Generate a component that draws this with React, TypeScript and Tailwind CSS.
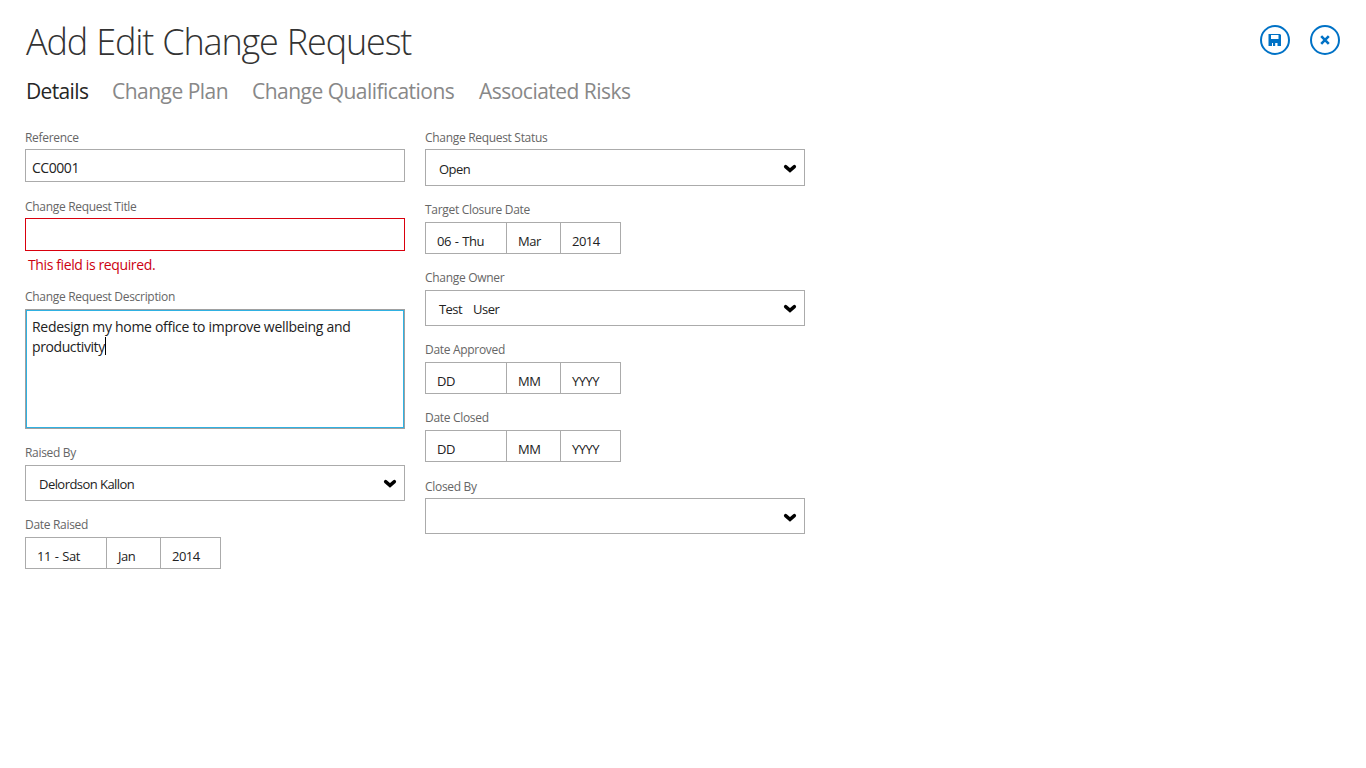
import React from "react";

function Chevron() {
  return (
    <svg width="14" height="10" viewBox="0 0 14 10" className="mt-[2px] mr-[7px] shrink-0">
      <path d="M2.6 2.6 L7 6.4 L11.4 2.6" fill="none" stroke="#000" strokeWidth="3.4" strokeLinecap="round" />
    </svg>
  );
}

function Label({ children }: { children: string }) {
  return <div className="h-[16px] whitespace-pre text-[12px] leading-[16px] tracking-[-0.31px] text-[#666]">{children}</div>;
}

function Select({ label, first, second }: { label: string; first: string; second?: string }) {
  return (
    <div>
      <Label>{label}</Label>
      <div className="mt-[4px] flex h-[36px] items-center justify-between border border-[#ababab] pl-[13px]">
        <div className="flex gap-[11px] pt-[2px] text-[13px] leading-[18px] tracking-[-0.55px] text-[#222]">
          <span>{first}</span>
          {second && <span>{second}</span>}
        </div>
        <Chevron />
      </div>
    </div>
  );
}

function DateField({ label, d, m, y }: { label: string; d: string; m: string; y: string }) {
  return (
    <div>
      <Label>{label}</Label>
      <div className="mt-[4px] flex h-[32px] w-[196px] border border-[#ababab] text-[13px] leading-[18px] tracking-[-0.5px] text-[#222] [word-spacing:1px]">
        <div className="w-[81px] border-r border-[#ababab] pt-[9px] pl-[11px]">{d}</div>
        <div className="w-[54px] border-r border-[#ababab] pt-[9px] pl-[11px]">{m}</div>
        <div className="pt-[9px] pl-[11px]">{y}</div>
      </div>
    </div>
  );
}

function SaveIcon() {
  return (
    <svg width="30" height="30" viewBox="0 0 30 30">
      <circle cx="15" cy="15" r="14" fill="#fff" stroke="#0072c6" strokeWidth="2" />
      <path fill="#0072c6" fillRule="evenodd" d="M8.5 9h11.5l1 1V21H8.5zM11 10v4h7.5v-4zM12 18v3h5.5v-3z" />
      <path fill="#0072c6" d="M13 18h2.2v3H13z" />
    </svg>
  );
}

function CloseIcon() {
  return (
    <svg width="30" height="30" viewBox="0 0 30 30">
      <circle cx="15" cy="15" r="14" fill="#fff" stroke="#0072c6" strokeWidth="2" />
      <path stroke="#0072c6" strokeWidth="2.6" d="M11.2 11.2l7.6 7.6M18.8 11.2l-7.6 7.6" />
    </svg>
  );
}

export default function App() {
  return (
    <div className="h-screen overflow-hidden bg-white pl-[25px] font-['Open_Sans',sans-serif]">
      <header className="flex h-[76px] justify-between pr-[26px]">
        <h1 className="pt-[17px] pl-px text-[36px] leading-[50px] font-light tracking-[-1.16px] text-[#333] [word-spacing:1px]">Add Edit Change Request</h1>
        <div className="flex gap-[20px] pt-[25px]">
          <button aria-label="Save" className="size-[30px]"><SaveIcon /></button>
          <button aria-label="Close" className="size-[30px]"><CloseIcon /></button>
        </div>
      </header>
      <nav className="flex h-[54px] text-[21px] leading-[30px] tracking-[-0.52px] text-[#888]">
        <div className="w-[87px] pl-px tracking-[-0.65px] text-[#262626]">Details</div>
        <div className="w-[140px]">Change Plan</div>
        <div className="w-[227px]">Change Qualifications</div>
        <div>Associated Risks</div>
      </nav>
      <main className="flex gap-[20px]">
        <section className="w-[380px]">
          <Label>Reference</Label>
          <div className="mt-[3px] h-[33px] border border-[#ababab] pt-[8px] pl-[6px] text-[14px] leading-[20px] tracking-[-0.45px] text-[#222]">CC0001</div>
          <div className="mt-[17px]">
            <Label>Change Request Title</Label>
            <div className="mt-[3px] h-[33px] border border-[#d9000d]" />
            <div className="mt-[4px] pl-[3px] text-[14px] leading-[20px] tracking-[-0.38px] text-[#cc0011]">This field is required.</div>
          </div>
          <div className="mt-[14px] mb-[16px]">
            <Label>Change Request Description</Label>
            <div className="mt-[4px] h-[120px] border border-[#a0a0a0]">
              <div className="h-full border border-[#2fb1e2] pt-[6px] pl-[5px] text-[14px] leading-[20px] tracking-[-0.3px] text-[#222]">
                <div className="whitespace-nowrap">Redesign my home office to improve wellbeing and</div>
                <div className="flex">
                  <span className="tracking-[-0.4px]">productivity</span>
                  <span className="h-[18px] w-px bg-black" />
                </div>
              </div>
            </div>
          </div>
          <div className="flex flex-col gap-[16px]">
            <Select label="Raised By" first="Delordson Kallon" />
            <DateField label="Date Raised" d="11 - Sat" m="Jan" y="2014" />
          </div>
        </section>
        <section className="w-[380px]">
          <div>
            <Label>Change Request Status</Label>
            <div className="mt-[3px] flex h-[37px] items-center justify-between border border-[#ababab] pl-[13px]">
              <span className="pt-[2px] text-[13px] leading-[18px] tracking-[-0.55px] text-[#222]">Open</span>
              <Chevron />
            </div>
          </div>
          <div className="mt-[16px] flex flex-col gap-[16px]">
            <DateField label="Target Closure Date" d="06 - Thu" m="Mar" y="2014" />
            <Select label="Change Owner" first="Test" second="User" />
            <DateField label="Date Approved" d="DD" m="MM" y="YYYY" />
            <DateField label="Date Closed" d="DD" m="MM" y="YYYY" />
          </div>
          <div className="mt-[17px]">
            <Label>Closed By</Label>
            <div className="mt-[3px] flex h-[36px] items-center justify-end border border-[#ababab] pt-px">
              <Chevron />
            </div>
          </div>
        </section>
      </main>
    </div>
  );
}
